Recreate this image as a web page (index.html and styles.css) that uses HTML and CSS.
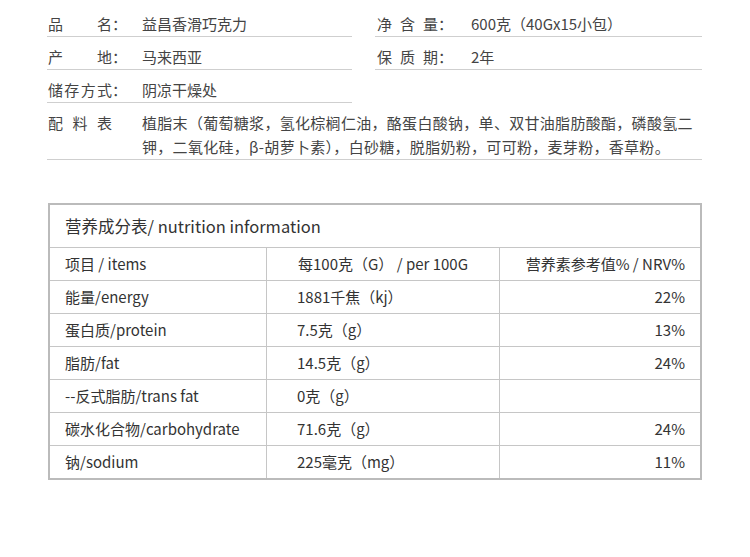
FILE: index.html
```html
<!DOCTYPE html>
<html lang="zh-CN">
<head>
<meta charset="utf-8">
<link rel="stylesheet" href="styles.css">
</head>
<body>
<div class="page">
  <div class="info">
    <div class="row left"><span class="lab">品名</span><span class="colon">：</span><span class="val">益昌香滑巧克力</span></div>
    <div class="row right"><span class="lab lab3">净含量</span><span class="colon">：</span><span class="val">600克（40Gx15小包）</span></div>
    <div class="row left"><span class="lab">产地</span><span class="colon">：</span><span class="val">马来西亚</span></div>
    <div class="row right"><span class="lab lab3">保质期</span><span class="colon">：</span><span class="val">2年</span></div>
    <div class="row left"><span class="lab">储存方式</span><span class="colon">：</span><span class="val">阴凉干燥处</span></div>
    <div class="row right empty"></div>
    <div class="row full"><span class="lab">配料表</span><span class="colon"></span><span class="val ingr">植脂末（葡萄糖浆，氢化棕榈仁油，酪蛋白酸钠，单、双甘油脂肪酸酯，磷酸氢二<br>钾，二氧化硅，β-胡萝卜素），白砂糖，脱脂奶粉，可可粉，麦芽粉，香草粉。</span></div>
  </div>

  <div class="nutri">
    <div class="title">营养成分表/ nutrition information</div>
    <div class="trow head">
      <div class="c1">项目 / items</div>
      <div class="c2 center">每100克（G） / per 100G</div>
      <div class="c3">营养素参考值% / NRV%</div>
    </div>
    <div class="trow"><div class="c1">能量/energy</div><div class="c2">1881千焦（kj）</div><div class="c3">22%</div></div>
    <div class="trow"><div class="c1">蛋白质/protein</div><div class="c2">7.5克（g）</div><div class="c3">13%</div></div>
    <div class="trow"><div class="c1">脂肪/fat</div><div class="c2">14.5克（g）</div><div class="c3">24%</div></div>
    <div class="trow"><div class="c1">--反式脂肪/trans fat</div><div class="c2">0克（g）</div><div class="c3"></div></div>
    <div class="trow"><div class="c1">碳水化合物/carbohydrate</div><div class="c2">71.6克（g）</div><div class="c3">24%</div></div>
    <div class="trow last"><div class="c1">钠/sodium</div><div class="c2">225毫克（mg）</div><div class="c3">11%</div></div>
  </div>
</div>
</body>
</html>
```

FILE: styles.css
```css
* { box-sizing: border-box; }
html, body { margin: 0; padding: 0; background: #fff; }
body {
  font-family: "Noto Sans CJK SC", "Noto Sans", sans-serif;
  color: #444;
}
.page {
  width: 750px;
  padding: 4px 0 0 47px;
}
.info {
  display: grid;
  grid-template-columns: 305px 327px;
  column-gap: 23px;
  width: 655px;
  font-size: 15px;
  line-height: 24px;
}
.row {
  display: flex;
  align-items: flex-start;
  padding-top: 8px;
  border-bottom: 1px solid #cfcfcf;
  white-space: nowrap;
}
.row.left { padding-left: 1px; }
.row.right { padding-left: 2px; }
.row.empty { border-bottom: none; }
.row.full { grid-column: 1 / 3; padding-left: 1px; }
.lab {
  width: 64px;
  text-align: justify;
  text-align-last: justify;
  flex: none;
}
.lab3 { width: 61px; }
.colon {
  width: 15px;
  flex: none;
}
.val {
  margin-left: 15px;
}
.val.ingr { letter-spacing: 0.3px; }
.row.right .val { margin-left: 18px; }

.nutri {
  margin-top: 43px;
  margin-left: 1px;
  width: 654px;
  border: 2px solid #bbbbbb;
  font-size: 15px;
  color: #333;
}
.title {
  height: 43px;
  border-bottom: 1px solid #c6c6c6;
  padding-left: 15px;
  font-size: 16.5px;
  line-height: 42px;
}
.trow {
  display: grid;
  grid-template-columns: 216px 233px 201px;
  height: 33px;
  border-bottom: 1px solid #c6c6c6;
  line-height: 32px;
  white-space: nowrap;
}
.trow.last { border-bottom: none; height: 32px; }
.c1 { padding-left: 15px; }
.c2 { border-left: 1px solid #c6c6c6; padding-left: 30px; }
.c2.center { padding-left: 0; text-align: center; }
.c3 { border-left: 1px solid #c6c6c6; padding-right: 15px; text-align: right; }
```
